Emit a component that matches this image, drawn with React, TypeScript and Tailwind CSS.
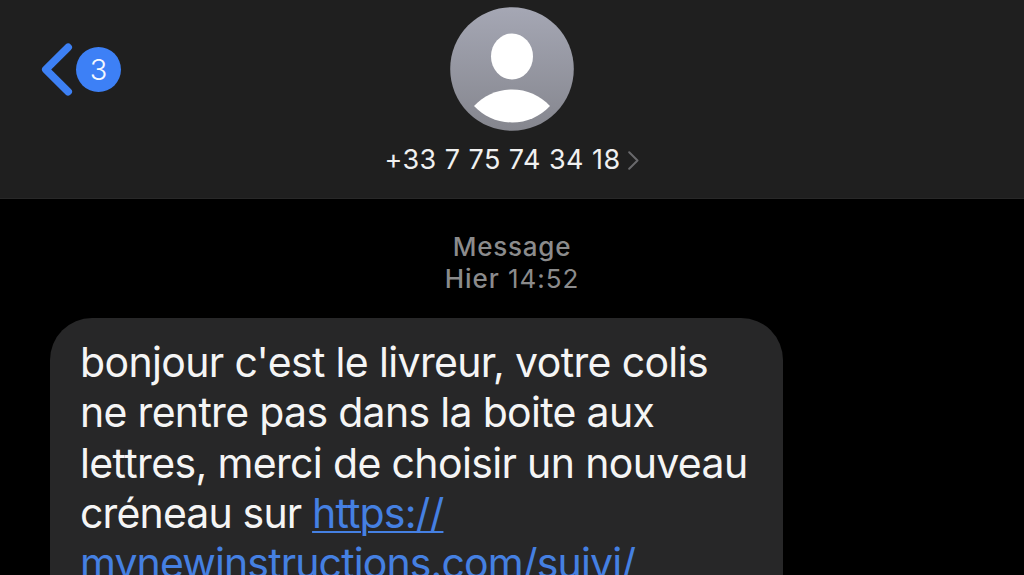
const unreadCount = 3;

const contact = '+33 7 75 74 34 18';

const messageLines = [
  { text: "bonjour c'est le livreur, votre colis", link: '', tracking: 'tracking-[-0.65px]' },
  { text: 'ne rentre pas dans la boite aux', link: '', tracking: 'tracking-[-0.69px]' },
  { text: 'lettres, merci de choisir un nouveau', link: '', tracking: 'tracking-[-0.65px]' },
  { text: 'créneau sur ', link: 'https://', tracking: 'tracking-[-0.85px]' },
  { text: '', link: 'mynewinstructions.com/suivi/', tracking: 'tracking-[-0.87px]' },
];

function BackButton() {
  return (
    <button type="button" className="flex h-[55px] items-center gap-[3px]">
      <svg className="h-[55px] w-[33px]" viewBox="0 0 33 55" fill="none">
        <path d="M28.2 5.3 5.8 27.5 28.2 49.7" stroke="#3d80f4" strokeWidth="7.6" strokeLinecap="round" strokeLinejoin="round" />
      </svg>
      <span className="flex size-[45px] items-center justify-center rounded-full bg-[#3d80f6] pt-px text-[29px] font-light text-[#f4f8ff]">{unreadCount}</span>
    </button>
  );
}

function Avatar() {
  return (
    <svg className="size-[124px]" viewBox="0 0 124 124">
      <defs>
        <linearGradient id="avatar" x1="0" y1="0" x2="0" y2="1">
          <stop offset="0" stopColor="#a5a7b4" />
          <stop offset="1" stopColor="#85868e" />
        </linearGradient>
      </defs>
      <circle cx="62" cy="62" r="61.8" fill="url(#avatar)" />
      <ellipse cx="62" cy="49.4" rx="21" ry="23" fill="#fff" />
      <path d="M24 99C34 88.5 47 82.5 62 82.5s28 6 38 16.5C90 109.5 77 115.500 62 115.500s-28-6-38-16.5Z" fill="#fff" />
    </svg>
  );
}

export default function App() {
  return (
    <div className="flex h-[575px] w-[1024px] flex-col overflow-hidden bg-black font-['Inter',sans-serif]">
      <header className="grid h-[199px] shrink-0 grid-cols-[1fr_300px_1fr] border-b border-[#282828] bg-[#1f1f1f]">
        <div className="pt-[42px] pl-10">
          <BackButton />
        </div>
        <div className="flex flex-col items-center pt-[7px]">
          <Avatar />
          <div className="mt-[13px] flex items-center gap-[7px] pr-px whitespace-nowrap">
            <span className="text-[27px] leading-8 tracking-[0.45px] text-[#f0f0f0]">{contact}</span>
            <svg className="h-[19px] w-[11px]" viewBox="0 0 11 19" fill="none">
              <path d="M1.2 1.2 9.5 9.500 1.2 17.8" stroke="#69696c" strokeWidth="2" strokeLinecap="round" strokeLinejoin="round" />
            </svg>
          </div>
        </div>
      </header>

      <main className="flex flex-col">
        <div className="mt-8 text-center text-[26px] leading-8 text-[#8b8b8c]">
          <p className="font-medium tracking-[0.75px]">Message</p>
          <p className="tracking-[0.95px]"><span className="font-medium">Hier</span> 14:52</p>
        </div>
        <div className="mt-[23px] ml-[50px] h-[320px] w-[733px] shrink-0 rounded-[42px] bg-[#272728] pt-[19px] pl-[30px] text-[41px] leading-[50.25px] text-[#f5f5f5]">
          {messageLines.map((line) => (
            <p key={line.text + line.link} className={`whitespace-pre ${line.tracking}`}>
              {line.text}
              {line.link && <a className="text-[#4580e2] underline decoration-2 underline-offset-[3px]">{line.link}</a>}
            </p>
          ))}
        </div>
      </main>
    </div>
  );
}
